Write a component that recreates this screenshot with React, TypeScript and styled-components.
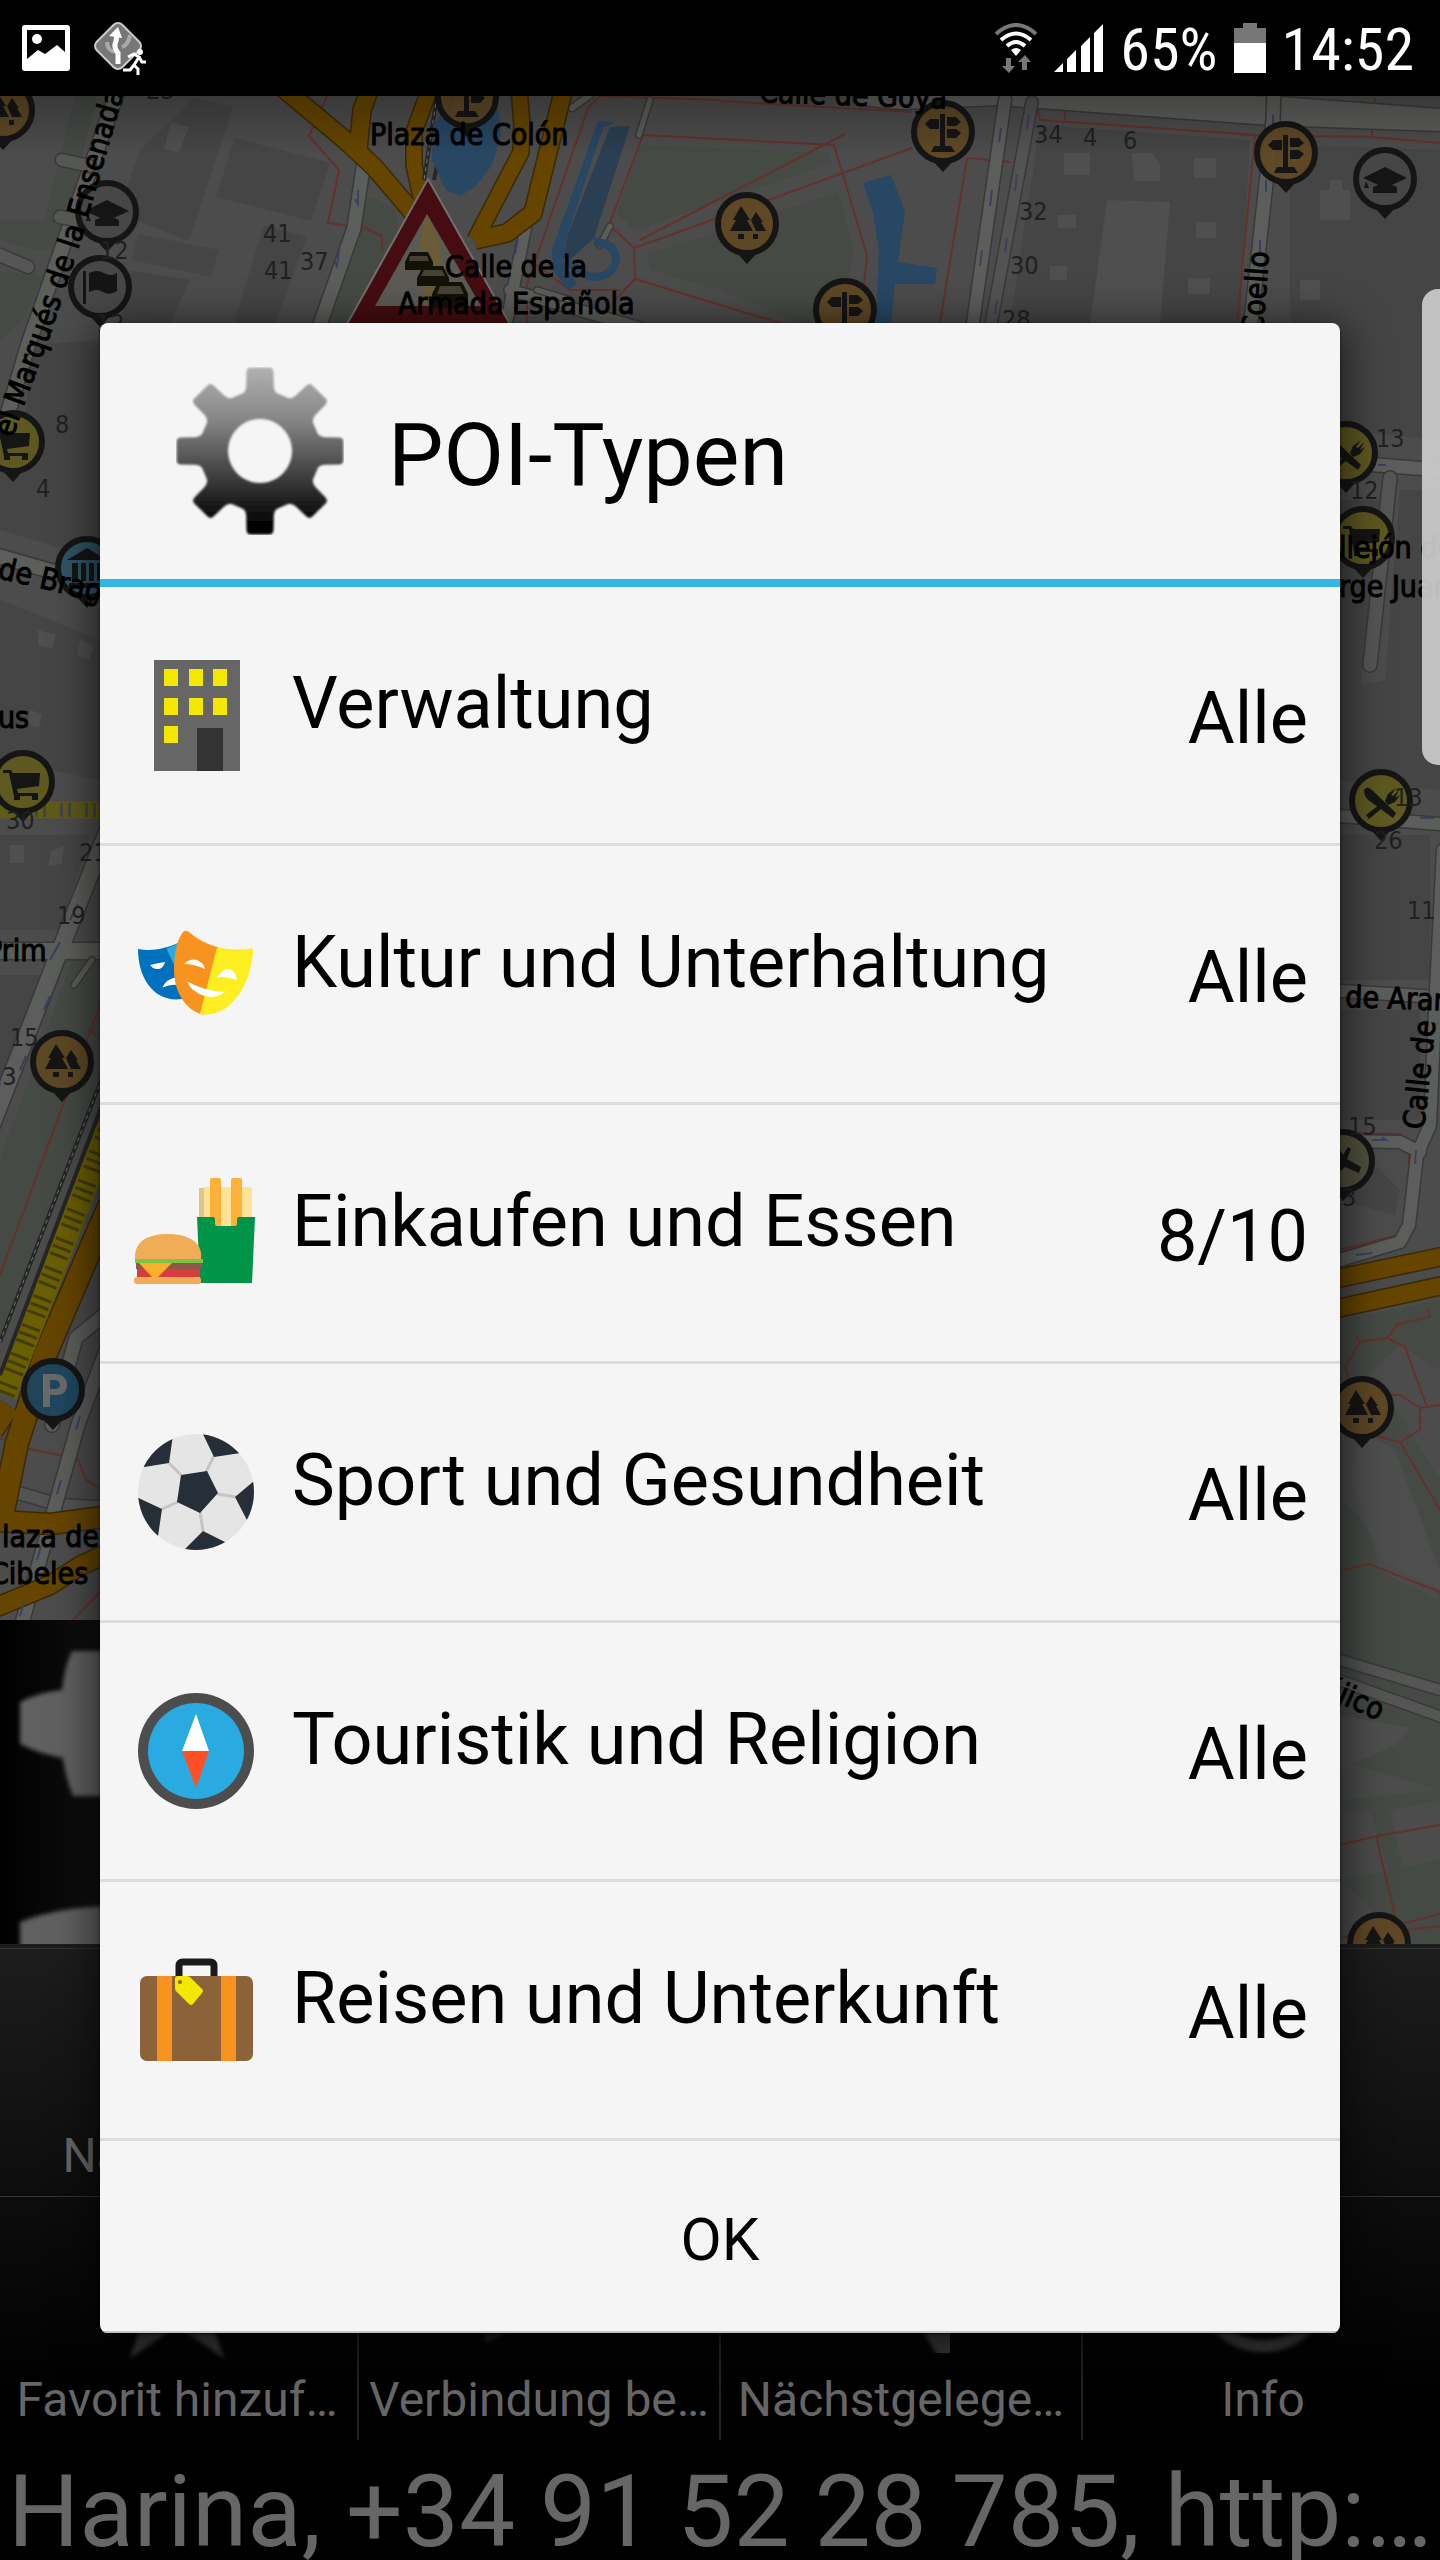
import React from 'react';
import styled, { createGlobalStyle } from 'styled-components';

const GlobalStyle = createGlobalStyle`
  *, *::before, *::after { box-sizing: border-box; }
  body { margin: 0; background: #000; font-family: Roboto, "Liberation Sans", sans-serif; }
  button { font: inherit; color: inherit; border: 0; background: none; padding: 0; cursor: pointer; }
`;

/* ---------- screen frame ---------- */

const Screen = styled.div`
  display: flex;
  flex-direction: column;
  min-height: 100vh;
  background: #000;
  overflow: hidden;
`;

const StatusBar = styled.header`
  display: flex;
  justify-content: space-between;
  align-items: center;
  height: 96px;
  padding: 0 26px 0 22px;
  color: #fff;
`;

const StatusGroup = styled.div<{ $gap: number }>`
  display: flex;
  align-items: center;
  gap: ${(p) => p.$gap}px;
`;

const StatusText = styled.span`
  padding-top: 4px;
  font-family: "Roboto Condensed", Roboto, sans-serif;
  font-size: 60px;
  line-height: 64px;
`;

const Stage = styled.div`
  flex: 1;
  display: grid;
  grid-template: minmax(0, 1fr) / minmax(0, 1fr);
`;

const Backdrop = styled.div`
  grid-area: 1 / 1;
  display: flex;
  flex-direction: column;
  min-width: 0;
`;

const MapArea = styled.div`
  position: relative;
  flex: 1;
  min-height: 0;
  overflow: hidden;
  background: #4c4c4c;
`;

const MapDrawing = styled.svg`
  position: absolute;
  inset: 0;
  width: 100%;
  height: 100%;
  text { font-family: "DejaVu Sans Condensed", "DejaVu Sans", sans-serif; }
`;

const ZoomControls = styled.div`
  position: absolute;
  left: 0;
  bottom: 0;
  width: 240px;
  height: 324px;
  background: linear-gradient(90deg, #000, #111 110px);
  svg { display: block; }
`;

const EdgeHandle = styled.div`
  position: absolute;
  right: 0;
  top: 193px;
  width: 18px;
  height: 476px;
  border-radius: 16px 0 0 16px;
  background: rgba(205, 205, 205, 0.92);
`;

/* ---------- bottom menu ---------- */

const Menu = styled.nav`
  display: grid;
  grid-template-columns: repeat(4, minmax(0, 1fr));
  grid-template-rows: 249px 243px;
  column-gap: 8px;
  padding-top: 4px;
  background: linear-gradient(#1d1d1d, #0d0d0d 50%, #000 92%);
  color: #666;
`;

const MenuRow = styled.div<{ $ruled?: boolean }>`
  grid-column: 1 / -1;
  display: grid;
  grid-template-columns: subgrid;
  border: 0 solid #333;
  border-width: ${(p) => (p.$ruled ? '1px 0' : '0')};
`;

const MenuButton = styled.button`
  position: relative;
  display: flex;
  flex-direction: column;
  align-items: center;
  justify-content: flex-end;
  gap: 4px;
  padding-bottom: 12px;
  font-size: 48px;
  line-height: 56px;
  white-space: nowrap;
  & + &::before {
    content: "";
    position: absolute;
    left: -5px;
    top: 0;
    bottom: 0;
    width: 2px;
    background: #222;
  }
`;

const Ticker = styled.p`
  margin: 0;
  height: 120px;
  padding: 12px 8px 0;
  overflow: hidden;
  white-space: nowrap;
  background: #000;
  color: #666;
  font-size: 100px;
  line-height: 120px;
`;

/* ---------- dialog ---------- */

const Overlay = styled.div`
  grid-area: 1 / 1;
  z-index: 1;
  display: flex;
  align-items: center;
  padding: 0 100px;
`;

const Dialog = styled.section`
  flex: 1;
  min-width: 0;
  border-radius: 8px;
  overflow: hidden;
  background: #f5f5f5;
  color: #000;
  box-shadow: 0 8px 44px 4px rgba(0, 0, 0, 0.65), 0 1px 3px rgba(0, 0, 0, 0.6);
`;

const DialogHeader = styled.header`
  display: flex;
  align-items: center;
  gap: 44px;
  height: 264px;
  padding: 0 76px;
  border-bottom: 8px solid #33b5e5;
`;

const DialogTitle = styled.h1`
  margin: 0;
  padding-top: 8px;
  font-size: 88px;
  font-weight: 400;
  line-height: 104px;
`;

const TypeList = styled.ul`
  margin: 0;
  padding: 0;
  list-style: none;
`;

const TypeItem = styled.li`
  border-bottom: 3px solid #dcdcdc;
`;

const TypeButton = styled.button`
  display: flex;
  align-items: center;
  gap: 32px;
  width: 100%;
  height: 256px;
  padding: 0 32px;
  font-size: 72px;
  line-height: 84px;
  text-align: left;
`;

const TypeName = styled.span`
  flex: 1;
  padding-bottom: 22px;
`;

const TypeValue = styled.span`
  padding-top: 8px;
`;

const OkButton = styled.button`
  display: block;
  width: 100%;
  height: 192px;
  padding-top: 8px;
  border-bottom: 2px solid #c4c4c4;
  font-size: 60px;
  line-height: 72px;
`;

/* ---------- icons ---------- */

const gearPath = (() => {
  const pts: string[] = [];
  for (let i = 0; i < 8; i++) {
    const base = (i * Math.PI) / 4 - Math.PI / 2;
    const at = (r: number, a: number) =>
      `${(84 + r * Math.cos(base + a)).toFixed(1)} ${(84 + r * Math.sin(base + a)).toFixed(1)}`;
    pts.push(`${i ? 'L' : 'M'}${at(60, -0.32)} Q${at(60, -0.24)} ${at(66, -0.21)} L${at(80, -0.17)} Q${at(84, -0.16)} ${at(84, -0.12)}`);
    pts.push(`L${at(84, 0.12)} Q${at(84, 0.16)} ${at(80, 0.17)} L${at(66, 0.21)} Q${at(60, 0.24)} ${at(60, 0.32)}`);
  }
  return pts.join(' ') + 'Z M84 52 a32 32 0 1 0 0.1 0Z';
})();

const GearIcon = () => (
  <svg width="168" height="168" viewBox="0 0 168 168" aria-hidden="true">
    <defs>
      <linearGradient id="gear" x1="0" y1="0" x2="0" y2="1">
        <stop offset="0" stopColor="#b0b0b0" />
        <stop offset="0.3" stopColor="#888" />
        <stop offset="0.95" stopColor="#000" />
      </linearGradient>
      <filter id="gearSoft">
        <feGaussianBlur stdDeviation="1" />
      </filter>
    </defs>
    <path d={gearPath} fill="url(#gear)" fillRule="evenodd" filter="url(#gearSoft)" />
  </svg>
);

const TypeIcon = ({ children }: { children: React.ReactNode }) => (
  <svg width="128" height="128" viewBox="0 0 128 128" aria-hidden="true">
    {children}
  </svg>
);

const BuildingIcon = () => (
  <TypeIcon>
    <path fill="#666" d="M22 9h86v111H22z" />
    <path
      fill="#f4e800"
      d="M32 18h14v17H32zM57 18h14v17H57zM81 18h14v17H81zM32 47h14v17H32zM57 47h14v17H57zM81 47h14v17H81zM32 75h14v17H32z"
    />
    <path fill="#333" d="M65 77h26v43H65z" />
  </TypeIcon>
);

const MasksIcon = () => (
  <TypeIcon>
    <path fill="#0071bc" d="M6 39C18 41 32 40 48 32L50 89C22 93 6 68 6 39Z" />
    <path fill="#29abe2" d="M34.500 38.500Q42 36 48 32L43 57Z" />
    <path fill="#fff" d="M18 55Q26 53 33 52Q31 60 24 59Q20 58 18 55ZM30.500 77.500Q34 69 45 67L46 75Q38 74 30.500 77.500Z" />
    <path fill="#f7931e" d="M53 21Q54 20 57 22Q69 33 87 37.500L72 105C54 101 42 82 42 60Q42 34 51 22Z" />
    <path fill="#fcee21" d="M85 37.400Q103 41 119.500 38.500Q121 38.500 121 40C119 78 96 109 68 104Z" />
    <path
      fill="#fff"
      d="M52 54Q58 48 65 50Q72 53 73 59Q62 54 52 54ZM85 67.500Q90 59 97 59Q104 61 105 70Q94 66 85 67.500ZM55 71.500Q73 81 92 82Q85 89 73 86Q59 82 55 71.500Z"
    />
  </TypeIcon>
);

const FoodIcon = () => (
  <TypeIcon>
    <path fill="#dcc68a" d="M67 19h6v31h-6z" />
    <path fill="#fee296" d="M72 21q0-3 3-3h42q3 0 3 3v40H72z" />
    <rect x="78" y="9" width="11" height="50" rx="2" fill="#fdb03a" />
    <rect x="99" y="9" width="11" height="50" rx="2" fill="#fdb03a" />
    <path fill="#009448" d="M65 48h16q2 0 2 2v5q0 2 2 2h18q2 0 2-2v-5q0-2 2-2h16l-3 66H68z" />
    <path fill="#f0ac56" d="M3 90C2 72 16 65 36 65S71 73 69 90z" />
    <path fill="#8f574b" d="M4 93h66v7H4z" />
    <path fill="#d63e3e" d="M5 100h63v8H5z" />
    <path fill="#fbb02a" d="M6 93h35L26 108q-3 2-6 0z" />
    <path fill="#7ac447" d="M3 90h68v4H3z" />
    <rect x="2" y="108" width="67" height="7" rx="3" fill="#f0ac56" />
  </TypeIcon>
);

const BallIcon = () => (
  <TypeIcon>
    <clipPath id="ball">
      <circle cx="64" cy="64" r="58" />
    </clipPath>
    <g clipPath="url(#ball)">
      <path fill="#e5e5e5" d="M0 0h128v128H0z" />
      <path stroke="#c4c4c4" strokeWidth="3" d="M37 35L49 47M82 28L74 44M104 69L85 66M71 103L68 84M30 81L46 74" />
      <path
        fill="#262f37"
        d="M49 47L75 43L86 65L68 85L45 74ZM42 0L37 35L0 41V0ZM68 0L82 29L128 22V0ZM128 48L103 69L118 98L128 90ZM46 128L71 103L101 118V128ZM0 67L30 81L25 115L0 110Z"
      />
    </g>
  </TypeIcon>
);

const CompassIcon = () => (
  <TypeIcon>
    <circle cx="64" cy="64" r="58" fill="#4d4d4d" />
    <circle cx="64" cy="64" r="48" fill="#29abe2" />
    <path fill="#fff" d="M64 27L77 64H50Z" />
    <path fill="#ff5023" d="M64 101L77 64H50Z" />
  </TypeIcon>
);

const SuitcaseIcon = () => (
  <TypeIcon>
    <path fill="none" stroke="#1a1a1a" strokeWidth="7" d="M47 32V20q0-4 4-4h27q4 0 4 4v12" />
    <rect x="8" y="30" width="113" height="85" rx="7" fill="#8c6239" />
    <path fill="#f7931e" d="M25 30h15v85H25zM89 30h15v85H89z" />
    <path fill="#f4e800" d="M43 33q0-3 3-3h8q2 0 4 1l12 12q2 2 0 4l-9 11q-2 2-4 0L45 46q-2-1-2-4z" />
    <circle cx="48" cy="36" r="2" fill="#8c6239" />
  </TypeIcon>
);

const GalleryIcon = () => (
  <svg width="48" height="46" viewBox="0 0 48 46" aria-hidden="true">
    <path
      fill="#fff"
      fillRule="evenodd"
      d="M3 0h42q3 0 3 3v40q0 3-3 3H3q-3 0-3-3V3q0-3 3-3ZM5 5v29l11-9 7 4 12-9 8 7V5Z"
    />
    <circle cx="15" cy="14" r="5" fill="#fff" />
  </svg>
);

const NavAppIcon = () => (
  <svg width="54" height="54" viewBox="0 0 54 54" aria-hidden="true">
    <rect x="8" y="7" width="36" height="36" rx="6" transform="rotate(45 26 25)" fill="#777" stroke="#ccc" strokeWidth="2" />
    <path fill="none" stroke="#aaa" strokeWidth="4" d="M15 21q0 9 9 10M38 14q-1 9-8 12" />
    <path fill="none" stroke="#fff" strokeWidth="5" d="M26 43V32q-5-6-2-12l1-7" />
    <path fill="#fff" d="M17 15L26 6L30 17Z" />
    <circle cx="48" cy="31" r="3" fill="#fff" />
    <path fill="none" stroke="#fff" strokeWidth="3" d="M36 36l6-3 5 3-5 8 4 4v6M47 36l3 5h4M42 44l-4 5h-7" />
  </svg>
);

const WifiIcon = () => (
  <svg width="44" height="50" viewBox="0 0 44 50" aria-hidden="true">
    <g fill="none" strokeWidth="4">
      <path stroke="#777" d="M2 11Q22-7 42 11" />
      <path stroke="#fff" d="M7 17Q22 4 37 17M13 23Q22 15 31 23" />
    </g>
    <path fill="#fff" d="M17 27q5-4 10 0l-5 6z" />
    <path fill="#777" d="M12 35h5v8h4l-6 7-7-7h4zM28 47h5v-8h4l-6-7-7 7h4z" />
  </svg>
);

const SignalIcon = () => (
  <svg width="50" height="48" viewBox="0 0 50 48" aria-hidden="true">
    <path fill="#fff" d="M0 48L9 39V48ZM13 48V35L22 26V48ZM27 48V22L36 13V48ZM40 48V9L49 0V48Z" />
  </svg>
);

const BatteryIcon = () => (
  <svg width="32" height="50" viewBox="0 0 32 50" aria-hidden="true">
    <path fill="#777" d="M9 0h14v5h9v20H0V5h9z" />
    <path fill="#fff" d="M0 20h32v30H0z" />
  </svg>
);

/* ---------- map ---------- */

type PinKind = 'sign' | 'trees' | 'school' | 'flag' | 'cart' | 'bank' | 'food' | 'parking' | 'hand';

const pinFill: Record<PinKind, string> = {
  sign: '#5f4823',
  trees: '#5f4823',
  school: '#474747',
  flag: '#474747',
  cart: '#605a1c',
  bank: '#2f5567',
  food: '#605a1c',
  parking: '#1b4560',
  hand: '#52523f',
};

const glyph: Record<PinKind, React.ReactNode> = {
  sign: <path d="M-3-18h5v36h-5zM-18-8l5-5h9v10h-9zM4-15h9l5 5-5 4H4zM4-3h9l5 4-5 5H4zM-12 20l3-6h17l4 6z" />,
  trees: <path d="M-6-18l9 14h-3l6 11h-23l6-11h-3zM9-12l7 10h-2l5 9H9L4-4zM-9 10h6v5h-6zM6 10h5v5H6z" />,
  school: <path d="M0-12L22-1 0 9-22-1ZM-12 8q12-7 24 0v6h-24zM-19 2l3 7h-5z" />,
  flag: <path d="M-17-16h3v33h-3zM-11-14q8-4 15 0t13 0V4q-8 5-14 1t-14 0z" />,
  cart: <path d="M-20-12h8l2 3h27l-1 13-22 3 1 4h20v3h-24l-5-23h-6zM-9 12h6v6h-6zM9 12h6v6H9z" />,
  bank: <path d="M0-20L20-8h-40zM-15-5h6v18h-6zM-6-5h5v18h-5zM2-5h5v18H2zM10-5h5v18h-5zM-18 15h36v5h-36z" />,
  food: <path d="M-17-11q3-5 8 0L15 12l-3 5L-10 1q-7-4-7-12zM-15 14L-2 4l3 3-13 11zM4 0l3-7 8-6-5 7 2 1 6-6-4 8 5-3-5 7-7 3z" />,
  parking: <path fill="#6a6a6a" fillRule="evenodd" d="M-10-16H3q11 1 11 11T3 5h-6v12h-7zM-3-10v9h5q5 0 5-4t-5-5z" />,
  hand: <path d="M-6-16l6 10 5-8 3 2-4 10 14 8-2 6-14-6-9 8-5-3 7-12z" />,
};

const pins: [number, number, PinKind][] = [
  [3, 110, 'trees'],
  [467, 97, 'sign'],
  [107, 212, 'school'],
  [100, 287, 'flag'],
  [747, 224, 'trees'],
  [943, 132, 'sign'],
  [845, 310, 'sign'],
  [1286, 153, 'sign'],
  [1385, 179, 'school'],
  [13, 442, 'cart'],
  [87, 568, 'bank'],
  [23, 782, 'cart'],
  [62, 1062, 'trees'],
  [53, 1390, 'parking'],
  [1346, 453, 'food'],
  [1363, 538, 'cart'],
  [1381, 801, 'food'],
  [1343, 1161, 'hand'],
  [1362, 1408, 'trees'],
  [1379, 1944, 'trees'],
];

const houseNumbers: [number, number, string][] = [
  [146, 99, '23'], [263, 242, '41'], [264, 279, '41'], [300, 270, '37'], [100, 259, '12'], [96, 332, '12'],
  [1034, 143, '34'], [1083, 146, '4'], [1123, 149, '6'], [1019, 220, '32'], [1010, 274, '30'], [1002, 328, '28'],
  [55, 433, '8'], [36, 497, '4'], [6, 829, '30'], [79, 861, '21'], [57, 924, '19'], [10, 1046, '15'], [-12, 1085, '13'],
  [1376, 447, '13'], [1350, 499, '12'], [1374, 849, '26'], [1394, 806, '13'], [1407, 919, '11'], [1348, 1135, '15'],
  [1342, 1206, '3'],
];

const streetLabels: [number, number, number, string][] = [
  [370, 145, 0, 'Plaza de Colón'],
  [445, 277, 0, 'Calle de la'],
  [398, 314, 0, 'Armada Española'],
  [759, 102, 2, 'Calle de Goya'],
  [1263, 335, -86, 'Coello'],
  [1339, 558, 0, 'llejón de'],
  [1339, 597, 0, 'rge Juan'],
  [1345, 1007, 2, 'de Aranda'],
  [1424, 1130, -84, 'Calle de'],
  [1321, 1695, 24, 'éjico'],
  [-3, 578, 13, 'de Braga'],
  [-2, 728, 0, 'us'],
  [-14, 961, 0, 'Prim'],
  [2, 1547, 0, 'laza de'],
  [-10, 1584, 0, 'Cibeles'],
];

const Road = ({ d, w, fill = '#5c5e5b' }: { d: string; w: number; fill?: string }) => (
  <g fill="none" strokeLinejoin="round" strokeLinecap="round">
    <path d={d} stroke="#393939" strokeWidth={w + 3} />
    <path d={d} stroke={fill} strokeWidth={w} />
  </g>
);

const mainRoads: [string, number][] = [
  ['M283 88L345 140L375 168L415 215L430 300', 17],
  ['M370 88L362 110L358 150', 17],
  ['M430 88L414 132L414 165L425 215', 15],
  ['M519 88L522 125L521 152L475 240', 15],
  ['M564 88L533 213L507 233L475 240', 17],
  ['M110 1205L100 1227L45 1355L17 1443L0 1525M-8 1430L8 1405', 22],
  ['M0 1521L50 1524L110 1516', 20],
  ['M-8 1609L50 1585L80 1566L110 1552', 18],
  ['M1335 1279L1445 1256', 17],
  ['M1335 1309L1445 1285', 17],
];

const CityMap = () => (
  <MapDrawing viewBox="0 96 1440 1848" preserveAspectRatio="xMidYMin slice" role="img" aria-label="Stadtplan">
    <defs>
      <linearGradient id="topShade" x1="0" y1="0" x2="0" y2="1">
        <stop offset="0" stopColor="#000" stopOpacity="0.25" />
        <stop offset="1" stopColor="#000" stopOpacity="0" />
      </linearGradient>
      <path id="ensenada" d="M-12 508L24 405L50 335L82 237L97 185L124 92" />
    </defs>

    <g fill="#454545">
      <path d="M195 98L233 107L189 241L118 213L140 150ZM235 138L330 163L311 221L216 197ZM138 234L219 250L211 277L132 260ZM264 225L307 237L275 323H234ZM130 270L190 280L170 323H120Z" />
      <path d="M1040 125L1250 140L1240 323H1010ZM1290 145L1440 150V440L1340 430L1290 323Z" />
      <path d="M0 470L100 500V560L0 530ZM0 600L100 640V780L0 760ZM0 835H90L60 930H0ZM0 975H55L10 1090H0ZM30 345L100 340V530L20 510Z" />
      <path d="M1340 500H1380L1360 690H1340ZM1400 490H1440V790L1340 780V690L1385 680ZM1340 835H1430V980H1340ZM1340 1010H1420V1120H1340Z" />
      <path d="M1340 1160H1370L1400 1190L1395 1215L1340 1200Z" />
    </g>
    <g fill="#4f4f4f">
      <path d="M1107 200L1170 202L1160 323H1090ZM1064 153h26v22h-26zM1132 153h20l8 10v18h-26zM1194 158h22v20h-22zM1058 215h18v13h-18zM1196 222h20v16h-20zM1050 266h17v14h-17zM1188 278h22v16h-22zM1320 190h30v30h-30zM1300 280h20v20h-20zM1330 180h12v32h-12z" />
      <path d="M171 122l18 5-10 25-15-3zM38 630l18 5-4 14-14-4zM80 640l15 6-6 14-12-4zM10 845h14v18H10zM52 850l12-4-2 18-14 2zM30 710l12 4-3 14-12-4z" />
    </g>
    <g fill="#454a45">
      <path d="M75 96H97L60 250L37 250L0 240V220H45ZM0 272L45 275L20 323L0 340ZM640 145L828 153L832 163L634 230L617 213ZM647 255L838 192L853 250L844 323H800L720 290L650 270ZM370 197L395 208L400 235L345 323H325L350 240Z" />
      <path d="M72 960H100V1075L0 1345V1160ZM1340 1320L1440 1300V1370L1400 1345L1340 1400ZM1390 1400L1440 1480V1600L1370 1460ZM1340 1500Q1375 1520 1378 1570L1440 1600V1790L1340 1760ZM1340 1800L1440 1790V1800L1390 1810L1410 1900L1400 1910L1370 1810L1340 1815ZM1340 1880L1440 1860V1944H1410Z" />
    </g>
    <path fill="#4e4e4e" d="M1340 1715L1410 1728L1395 1745L1340 1770ZM1360 1430L1395 1450L1440 1570V1590L1380 1560L1350 1480Z" />

    <g fill="none" stroke="#64312c" strokeWidth="2">
      <path d="M327 96L309 136L339 170L328 223L365 228L382 236V250M600 96L588 108L527 285V323M600 96L720 100M720 101L912 112M643 135L720 139L834 145L867 255L860 323M845 134L640 240M912 148L760 203L634 248L609 225M634 248L635 279L720 305L780 323M635 279L615 300M530 260L570 290H620M967 158L940 323M967 158L1011 162M1036 103L1040 120L1065 122V105M1040 120L1255 135L1237 323M1240 135L1370 137L1440 143M1297 97V103M1375 98V106M1372 124V136M643 135L609 225" />
      <path d="M100 1005L0 1275M87 1030L100 1036M0 1438L25 1448L78 1459L86 1480L100 1488M73 1620L100 1592M65 1505L80 1508" />
      <path d="M1340 1133L1400 1134L1409 1145V1225L1395 1236L1340 1250M1356 1335L1360 1342L1345 1367L1350 1380M1360 1342L1387 1338L1398 1324L1430 1317L1428 1308M1387 1338L1405 1347L1427 1407L1440 1405M1427 1407L1420 1408V1430L1400 1442L1440 1510M1370 1395H1400L1420 1408M1400 1442L1376 1436M1340 1571L1369 1564L1440 1592M1340 1845L1377 1836L1440 1825M1376 1836L1397 1925L1408 1944M1340 1938L1397 1925L1440 1914M1405 1930L1440 1926" />
    </g>

    <Road d="M118 90L28 345L0 440" w={14} />
    <Road d="M62 160L90 166M-5 253L28 267M60 217L75 220" w={12} fill="#555755" />
    <Road d="M365 155L354 228L318 330" w={13} />
    <Road d="M528 215L505 330M510 290L640 328" w={11} />
    <Road d="M590 95L572 108" w={6} />
    <Road d="M860 98L900 102L1000 98L1270 118L1440 124M900 92L1280 104L1440 116" w={14} />
    <Road d="M1005 100L972 330" w={12} />
    <Road d="M1032 102L990 330" w={11} fill="#535353" />
    <Road d="M1274 90L1273 120L1250 330" w={13} />
    <Road d="M1340 462L1440 470" w={13} />
    <Road d="M1390 478L1370 665" w={13} fill="#555" />
    <Road d="M1340 816L1440 824M1340 991L1440 997" w={12} />
    <Road d="M1443 850L1436 990L1430 1125L1417 1155L1409 1225L1400 1242L1340 1260M1340 1141L1400 1142L1420 1152" w={12} />
    <Road d="M1330 1657L1450 1693M1330 1677L1450 1720" w={10} fill="#555" />
    <Road d="M-5 555L110 588" w={14} />
    <Road d="M110 825L60 950L-10 1130M-5 951H110" w={16} />
    <Road d="M92 960L74 985" w={5} />
    <Road d="M15 1492L60 1505L110 1508" w={12} fill="#535353" />
    <Road d="M110 1310L76 1338L52 1425M110 1340L78 1425L54 1510L20 1630" w={13} />
    <Road d="M650 100L639 135M610 226L600 245M537 290L570 300" w={5} />

    <g fill="none" strokeLinejoin="round">
      {mainRoads.map(([d, w]) => (
        <path key={d} d={d} stroke="#3a2a05" strokeWidth={w + 3} />
      ))}
      {mainRoads.map(([d, w]) => (
        <path key={d} d={d} stroke="#654500" strokeWidth={w} />
      ))}
    </g>

    <path d="M110 1124L5 1395" stroke="#6a5f00" strokeWidth="23" fill="none" />
    <path d="M110 1124L5 1395" stroke="#453c0c" strokeWidth="19" strokeDasharray="3 5 3 5 3 12" fill="none" />
    <path d="M0 810H100" stroke="#5f5b18" strokeWidth="17" fill="none" />
    <path d="M35 810H100" stroke="#444" strokeWidth="14" strokeDasharray="3 5 3 14" fill="none" />
    <path d="M102 1078L0 1342M110 1084L0 1375M437 96L424 180M452 96L434 180" stroke="#262626" strokeWidth="4" fill="none" />
    <path d="M102 1078L0 1342M437 96L424 180" stroke="#777" strokeWidth="1" strokeDasharray="4 4" fill="none" />

    <g fill="#274763">
      <path d="M433 125L445 110L498 108L501 135L492 165L475 187L460 196L446 190L432 160ZM598 121L615 122L603 128L564 245L564 262L577 284L568 290L553 270L552 250Z" />
      <path d="M863 183L891 175L905 211L898 262L937 268L935 284L895 284L891 323H876L879 250L873 213Z" />
    </g>
    <path fill="#2a3f52" d="M610 127L630 126L594 238L572 258L568 265L563 255L567 237Z" />
    <path fill="none" stroke="#274763" strokeWidth="8" d="M594 242Q615 242 616 260Q612 277 594 277Q577 275 571 262" />

    <g stroke="#3f3d60" strokeWidth="2" fill="none">
      <path d="M358 190v14l-3-5M339 250l-2 16-3-6M518 238l-3 16M1001 128l-2 14M992 190l-2 16M982 250l-2 16M1029 115l-2 14M1017 175l-2 16M1007 238l-2 14M997 300l-2 14M1273 115v12M1266 180v12M1260 240v12" />
      <path d="M1372 1140h14l-4-3M1416 1150l-1 14M1356 1255l16-2M1420 818h14M1378 465h8M50 960l10-18M70 920l8-16M44 1010l6-14M20 1070l6-14M76 1430l4-14M57 1494l4-14M37 1560l4-14M20 1616l4-14" />
    </g>

    <path d="M428 179L346 326H511Z" fill="#450d11" stroke="#707070" strokeWidth="2" strokeLinejoin="round" />
    <path d="M427 214L375 306H481Z" fill="#5b5a54" />
    <path d="M427 214L420 240L424 306H446L438 236Z" fill="#6b5b36" />
    <path fill="#131209" d="M405 262l5-10h18l5 10v8h-28zM417 278l6-12h20l6 12v8h-32zM432 294l6-12h24l6 12v14h-36z" />
    <path fill="#444234" d="M410 256h17l2 5h-20zM424 270h18l3 6h-24zM440 286h20l4 8h-27z" />

    {pins.map(([x, y, kind]) => (
      <g key={`${x}-${y}`} transform={`translate(${x} ${y})`} fill="#151515">
        <path d="M-11 28L0 40L11 28Z" />
        <circle r="29" fill={pinFill[kind]} stroke="#151515" strokeWidth="6" fillOpacity="0.92" />
        {glyph[kind]}
      </g>
    ))}

    <g fontSize="25" fill="#202020">
      {houseNumbers.map(([x, y, n]) => (
        <text key={`${x}-${y}`} x={x} y={y}>{n}</text>
      ))}
    </g>
    <g fontSize="30" fill="#000" stroke="#000" strokeWidth="1">
      {streetLabels.map(([x, y, turn, name]) => (
        <text key={name} transform={`translate(${x} ${y}) rotate(${turn})`}>{name}</text>
      ))}
      <text textAnchor="end">
        <textPath href="#ensenada" startOffset="100%">el Marqués de la Ensenada</textPath>
      </text>
    </g>
    <rect x="0" y="96" width="1440" height="60" fill="url(#topShade)" />
  </MapDrawing>
);

/* ---------- content ---------- */

const poiTypes = [
  { name: 'Verwaltung', value: 'Alle', Icon: BuildingIcon },
  { name: 'Kultur und Unterhaltung', value: 'Alle', Icon: MasksIcon },
  { name: 'Einkaufen und Essen', value: '8/10', Icon: FoodIcon },
  { name: 'Sport und Gesundheit', value: 'Alle', Icon: BallIcon },
  { name: 'Touristik und Religion', value: 'Alle', Icon: CompassIcon },
  { name: 'Reisen und Unterkunft', value: 'Alle', Icon: SuitcaseIcon },
];

const MenuIcon = ({ children }: { children?: React.ReactNode }) => (
  <svg width="160" height="160" viewBox="0 0 160 160" fill="#383838" aria-hidden="true">
    <defs>
      <filter id="soft">
        <feGaussianBlur stdDeviation="2" />
      </filter>
    </defs>
    <g filter="url(#soft)">{children}</g>
  </svg>
);

export default function App() {
  return (
    <Screen>
      <GlobalStyle />
      <StatusBar>
        <StatusGroup $gap={22}>
          <GalleryIcon />
          <NavAppIcon />
        </StatusGroup>
        <StatusGroup $gap={16}>
          <WifiIcon />
          <SignalIcon />
          <StatusText>65%</StatusText>
          <BatteryIcon />
          <StatusText>14:52</StatusText>
        </StatusGroup>
      </StatusBar>

      <Stage>
        <Backdrop>
          <MapArea>
            <CityMap />
            <ZoomControls>
              <svg width="240" height="324" viewBox="0 0 240 324" fill="#606060" aria-hidden="true">
                <defs>
                  <filter id="controlSoft">
                    <feGaussianBlur stdDeviation="2" />
                  </filter>
                </defs>
                <g filter="url(#controlSoft)">
                  <path d="M20 82Q40 72 62 70Q64 48 72 31H168Q176 48 178 70Q200 72 220 82V124Q200 134 178 138Q176 156 168 176H73Q65 156 63 138Q40 134 20 124Z" />
                  <path d="M20 302Q60 286 120 286T220 302V330H20Z" />
                </g>
              </svg>
            </ZoomControls>
            <EdgeHandle />
          </MapArea>
          <Menu>
            <MenuRow $ruled>
              <MenuButton>Navigation</MenuButton>
            </MenuRow>
            <MenuRow>
              <MenuButton>
                <MenuIcon>
                  <path d="M80 10L98 66H152L110 100L127 150L80 118L33 150L50 100L8 66H62Z" />
                </MenuIcon>
                Favorit hinzuf…
              </MenuButton>
              <MenuButton>
                <MenuIcon>
                  <path fill="#1c1c1c" d="M26 120H56L26 136Z" />
                </MenuIcon>
                Verbindung be…
              </MenuButton>
              <MenuButton>
                <MenuIcon>
                  <path fill="none" stroke="#383838" strokeWidth="24" strokeLinecap="round" d="M96 90L126 140" />
                </MenuIcon>
                Nächstgelege…
              </MenuButton>
              <MenuButton>
                <MenuIcon>
                  <circle cx="80" cy="76" r="62" fill="none" stroke="#383838" strokeWidth="12" />
                  <path d="M62 54h28v54h12v8H60v-8h12V62H62zM72 30h18v16H72z" />
                </MenuIcon>
                Info
              </MenuButton>
            </MenuRow>
          </Menu>
          <Ticker>Harina, +34 91 52 28 785, http:…</Ticker>
        </Backdrop>

        <Overlay>
          <Dialog role="dialog" aria-labelledby="dialog-title">
            <DialogHeader>
              <GearIcon />
              <DialogTitle id="dialog-title">POI-Typen</DialogTitle>
            </DialogHeader>
            <TypeList>
              {poiTypes.map(({ name, value, Icon }) => (
                <TypeItem key={name}>
                  <TypeButton>
                    <Icon />
                    <TypeName>{name}</TypeName>
                    <TypeValue>{value}</TypeValue>
                  </TypeButton>
                </TypeItem>
              ))}
            </TypeList>
            <OkButton>OK</OkButton>
          </Dialog>
        </Overlay>
      </Stage>
    </Screen>
  );
}
